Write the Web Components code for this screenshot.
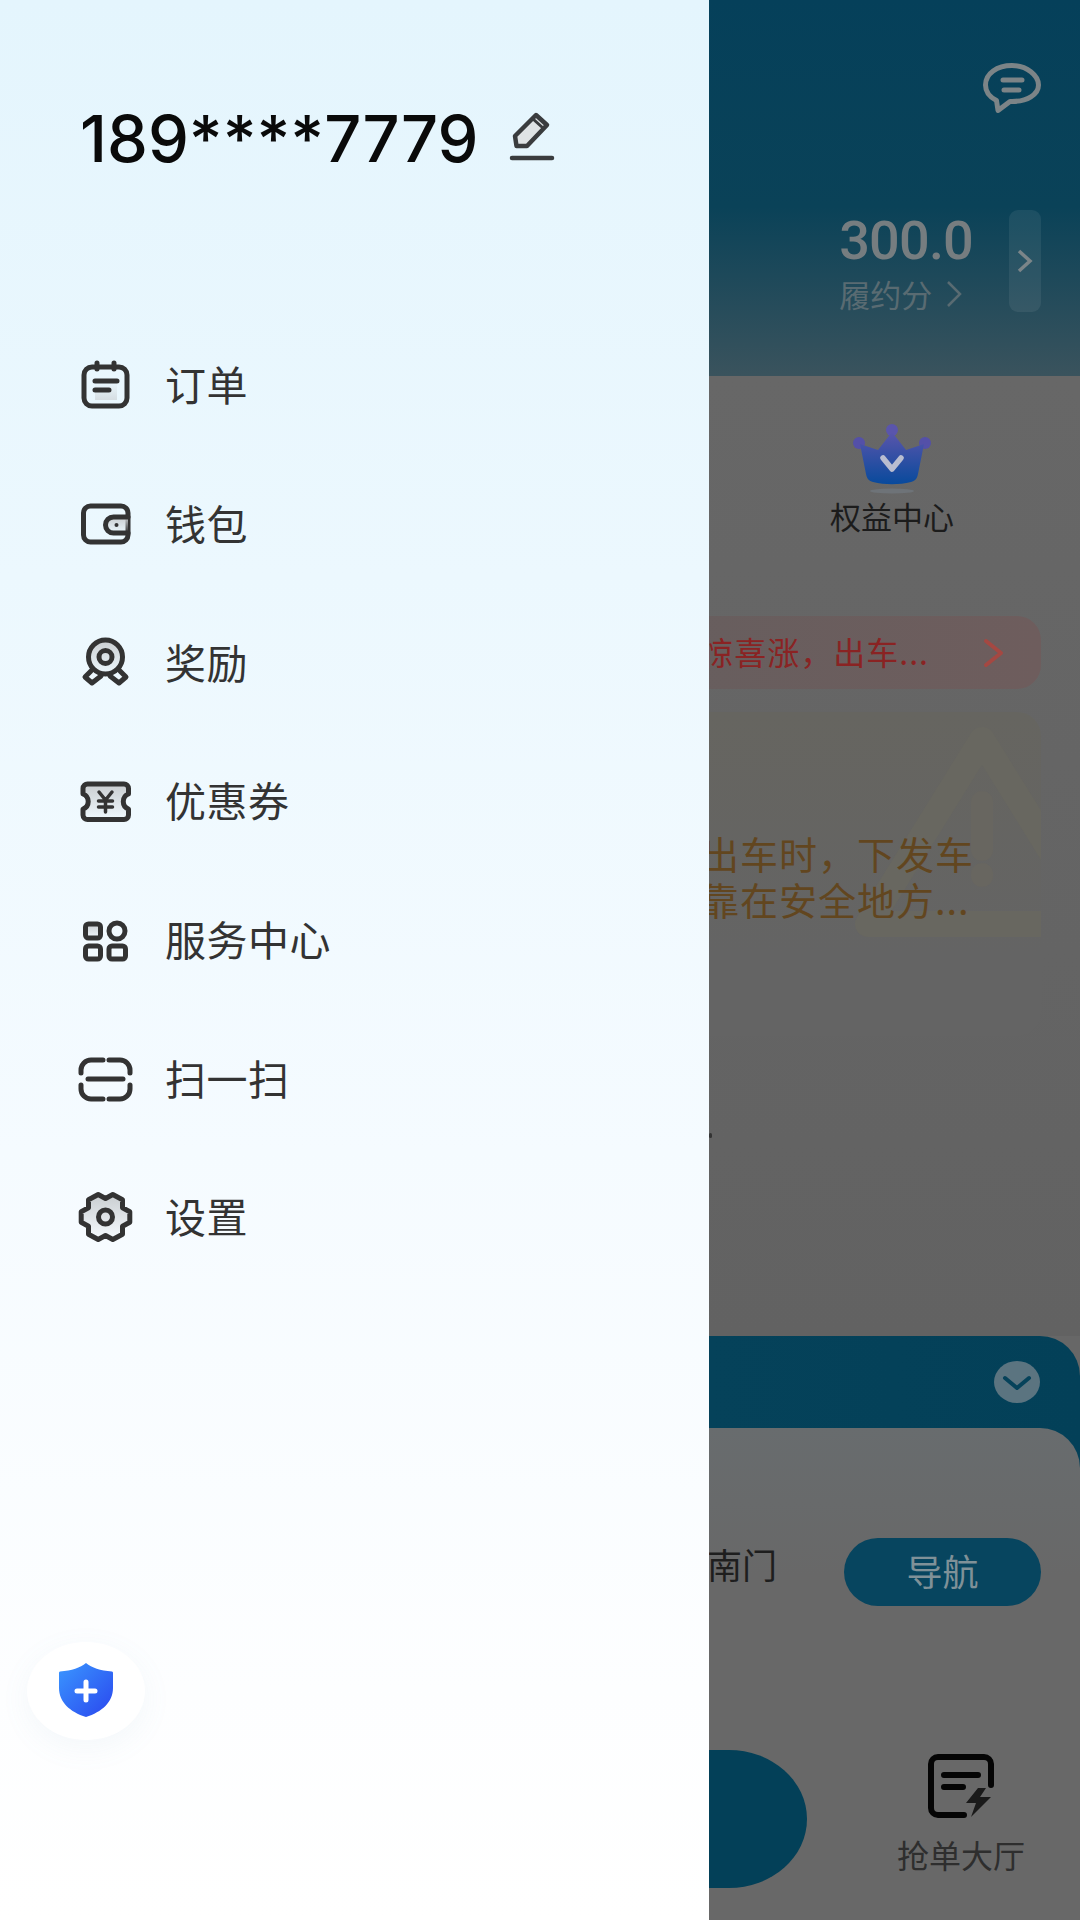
<!DOCTYPE html>
<html lang="zh">
<head>
<meta charset="utf-8">
<title>侧边栏</title>
<style>
  html, body { margin: 0; padding: 0; background: #666; }
  body { width: 1080px; height: 1920px; overflow: hidden; font-family: "Noto Sans CJK SC", "Noto Sans", sans-serif; }
</style>
</head>
<body>
<app-shell>
  <side-drawer>
    <drawer-head slot="head" phone="189****7779"></drawer-head>
    <menu-item icon="order">订单</menu-item>
    <menu-item icon="wallet">钱包</menu-item>
    <menu-item icon="medal">奖励</menu-item>
    <menu-item icon="coupon">优惠券</menu-item>
    <menu-item icon="grid">服务中心</menu-item>
    <menu-item icon="scan">扫一扫</menu-item>
    <menu-item icon="gear">设置</menu-item>
    <shield-button slot="foot"></shield-button>
  </side-drawer>
  <home-behind></home-behind>
</app-shell>

<script>
// gear outline, six teeth pointing left and right
const gearPath = () => {
  const cx = 29.5, cy = 30, pts = [];
  const at = (deg, r) => {
    const a = deg * Math.PI / 180;
    return (cx + r * 1.06 * Math.cos(a)).toFixed(1) + ' ' + (cy + r * Math.sin(a)).toFixed(1);
  };
  for (let k = 0; k < 6; k++) {
    const a = k * 60;
    pts.push(at(a - 13, 23.5), at(a + 13, 23.5), at(a + 30, 18.5));
  }
  return 'M' + pts.join('L') + 'Z';
};

const shade = `<defs><linearGradient id="sh" x1="0" y1="0" x2="0" y2="1">
  <stop offset="0" stop-color="#c9cdd0"/><stop offset="1" stop-color="#c9cdd0" stop-opacity="0"/></linearGradient></defs>`;

// menu icons, all on a 60x60 box
const ICONS = {
  order: `<rect x="8" y="12" width="43" height="39" rx="8"/><path d="M21 8v6M38 8v6"/>
    <rect x="19" y="27" width="22" height="18" fill="url(#sh)" stroke="none" opacity=".6" transform="rotate(180 30 36)"/>
    <path d="M19 26h22M19 35h14"/>`,
  wallet: `<rect x="7.5" y="12" width="44.5" height="36" rx="7" fill="none"/>
    <path d="M52 23H37.5a7.5 7.5 0 0 0 0 16H52" fill="url(#sh)"/><circle cx="40.5" cy="31" r="2" fill="#333" stroke="none"/>`,
  medal: `<circle cx="29.5" cy="24" r="17" fill="url(#sh)"/><circle cx="29.5" cy="24" r="6.5"/>
    <path d="M15 38l-6 6 7 6 9-7M44 38l6 6-7 6-9-7"/>`,
  coupon: `<path d="M12 13h36a4.500 4.500 0 0 1 4.500 4.500V23a8 8 0 0 0 0 15v6a4.500 4.500 0 0 1-4.500 4.500H12A4.500 4.500 0 0 1 7 44v-6a8 8 0 0 0 0-15v-5.500A4.500 4.500 0 0 1 12 13z" fill="url(#sh)"/>
    <path d="M23 21l6.500 8 6.500-8M29.500 29v12M22.500 30h14M22.500 36h14" stroke-width="3.500"/>`,
  grid: `<rect x="9.500" y="14" width="15" height="14" rx="3" fill="url(#sh)"/><circle cx="41" cy="21" r="8"/>
    <rect x="9.500" y="36" width="15" height="13" rx="3"/><rect x="33" y="36" width="16.500" height="13" rx="3"/>`,
  scan: `<path d="M27 11H15a10 10 0 0 0-10 10v3M33 11h11a10 10 0 0 1 10 10v3M5 36v4a10 10 0 0 0 10 10h12M54 36v4a10 10 0 0 1-10 10H33"/>
    <path d="M12 30h35"/>`,
  gear: `<path d="${gearPath()}" fill="url(#sh)"/><circle cx="29.500" cy="30" r="7"/>`
};

class AppShell extends HTMLElement {
  constructor() {
    super();
    this.attachShadow({ mode: 'open' });
    this.shadowRoot.innerHTML = `
      <style>
        :host { display: flex; width: 1080px; height: 1920px; overflow: hidden; }
      </style>
      <slot></slot>`;
  }
}

class SideDrawer extends HTMLElement {
  constructor() {
    super();
    this.attachShadow({ mode: 'open' });
    this.shadowRoot.innerHTML = `
      <style>
        :host {
          display: flex; flex-direction: column; flex: 0 0 709px; height: 1920px; position: relative;
          background: linear-gradient(180deg, #e4f5fd 0%, #ecf8fe 30%, #f5fbff 60%, #fdfeff 88%, #fff 100%);
        }
        .menu { display: flex; flex-direction: column; margin-top: 129px; }
        .foot { flex: 1; display: flex; align-items: flex-end; padding: 0 0 180px 27px; }
      </style>
      <slot name="head"></slot>
      <div class="menu"><slot></slot></div>
      <div class="foot"><slot name="foot"></slot></div>`;
  }
}

class DrawerHead extends HTMLElement {
  connectedCallback() {
    this.attachShadow({ mode: 'open' });
    this.shadowRoot.innerHTML = `
      <style>
        :host { display: flex; align-items: center; height: 187px; padding: 91px 0 0 80px; box-sizing: border-box; }
        .phone { font: 500 65px/96px Inter, sans-serif; color: #0a0a0a; }
        svg { width: 48px; height: 52px; margin: -4px 0 0 30px; }
      </style>
      <span class="phone">${this.getAttribute('phone')}</span>
      <svg viewBox="0 0 48 52" fill="none" stroke="#3a3c3e" stroke-width="4.500" stroke-linejoin="round" stroke-linecap="round">
        <path d="M28 4l11 10-20 21H8.500L7 25z" fill="#dfe3e5"/>
        <path d="M25 8l10 9" stroke-width="3"/>
        <path d="M4 47h40"/>
      </svg>`;
  }
}

class MenuItem extends HTMLElement {
  connectedCallback() {
    this.attachShadow({ mode: 'open' });
    this.shadowRoot.innerHTML = `
      <style>
        :host { display: flex; align-items: center; height: 138.670px; padding-left: 76px; gap: 29px; }
        svg { width: 60px; height: 60px; flex: none; }
        .label { font-size: 41px; line-height: 56px; letter-spacing: .5px; color: #333; margin-top: -4px; }
      </style>
      <svg viewBox="0 0 60 60" fill="none" stroke="#333" stroke-width="5" stroke-linecap="round" stroke-linejoin="round">
        ${shade}${ICONS[this.getAttribute('icon')]}
      </svg>
      <span class="label"><slot></slot></span>`;
  }
}

class ShieldButton extends HTMLElement {
  constructor() {
    super();
    this.attachShadow({ mode: 'open' });
    this.shadowRoot.innerHTML = `
      <style>
        :host {
          display: flex; align-items: center; justify-content: center; width: 118px; height: 98px; border-radius: 50%;
          background: #fff; box-shadow: 0 8px 30px rgba(120,150,190,.07);
        }
        svg { width: 56px; height: 56px; margin-top: -3px; }
      </style>
      <svg viewBox="0 0 56 56">
        <defs><linearGradient id="b" x1="0" y1="0" x2="1" y2="1">
          <stop offset="0" stop-color="#3a97ff"/><stop offset="1" stop-color="#2a46ee"/></linearGradient></defs>
        <path d="M28 1c6 5 14 7.500 26 8.500a1.500 1.500 0 0 1 1 1.500v15c0 14-11 24-27 29C12 50 1 40 1 26V11a1.500 1.500 0 0 1 1-1.500C14 8.500 22 6 28 1z" fill="url(#b)"/>
        <path d="M28 20v18M19 29h18" stroke="#fff" stroke-width="5" stroke-linecap="round"/>
      </svg>`;
  }
}

// the dimmed page seen to the right of the drawer
class HomeBehind extends HTMLElement {
  constructor() {
    super();
    this.attachShadow({ mode: 'open' });
    this.shadowRoot.innerHTML = `
      <style>
        :host { display: flex; flex-direction: column; flex: 0 0 371px; width: 371px; height: 1920px; overflow: hidden; background: #676767; }
        * { box-sizing: border-box; }
        .top {
          height: 376px; display: flex; flex-direction: column; align-items: flex-end; padding: 63px 39px 0 0; flex: none;
          background: linear-gradient(180deg, #05405a 0%, #0a4258 55%, #3a535d 100%);
        }
        .chat { width: 58px; height: 50px; }
        .stats { display: flex; margin-top: 97px; gap: 36px; }
        .score { display: flex; flex-direction: column; padding-top: 2px; }
        .num { font: 500 54px/57px Roboto, sans-serif; color: #767d80; letter-spacing: -.8px; }
        .sub { display: flex; align-items: center; gap: 14px; font-size: 31px; line-height: 42px; color: #596b72; margin-top: 4px; }
        .tab { width: 32px; height: 102px; border-radius: 9px; background: rgba(255,255,255,.07); display: flex; align-items: center; justify-content: center; }

        .card { height: 960px; flex: none; display: flex; flex-direction: column; padding: 48px 39px 0 0; border-top-right-radius: 40px; background: linear-gradient(180deg, #676767, #626262); }
        .perk { align-self: flex-end; margin-right: 87px; display: flex; flex-direction: column; align-items: center; }
        .perk svg { width: 84px; height: 72px; }
        .perk span { font-size: 31px; line-height: 44px; color: #1c1c1c; margin-top: -2px; }

        .notice { margin-top: 78px; height: 73px; border-radius: 24px; margin-left: -40px; padding-right: 36px; display: flex; align-items: center; justify-content: flex-end; gap: 54px; background: linear-gradient(90deg, #675e5e, #6e5d5d); }
        .notice span { font-size: 32px; color: #8a2323; letter-spacing: 1px; white-space: nowrap; margin-top: -3px; }

        .warn { margin-top: 23px; height: 324px; border-radius: 24px; margin-left: -40px; position: relative; overflow: hidden; display: flex; flex-direction: column; align-items: flex-end; padding: 118px 67px 0 0; background: linear-gradient(180deg, #666560, #646464 75%); }
        .warn svg { position: absolute; right: -83px; top: 14px; width: 270px; height: 220px; }
        .warn span { position: relative; font-size: 38px; line-height: 46px; letter-spacing: 1px; color: #62461f; white-space: nowrap; }
        .dot { width: 3px; height: 5px; margin-top: 97px; background: #333; border-radius: 2px; }

        .panel { flex: 1; display: flex; flex-direction: column; border-top-right-radius: 40px; background: linear-gradient(90deg, #05425a, #034058); }
        .panel-head { height: 92px; flex: none; display: flex; align-items: center; justify-content: flex-end; padding-right: 40px; }
        .panel-head svg { width: 46px; height: 42px; }
        .panel-body { flex: 1; display: flex; flex-direction: column; border-top-right-radius: 40px; background: linear-gradient(180deg, #686c6e, #686868 30%); }
        .addr { display: flex; align-items: center; justify-content: space-between; margin-top: 110px; padding-right: 39px; }
        .addr > span { font-size: 35px; color: #1e1e1e; white-space: nowrap; margin: -18px 0 0 -2px; }
        .nav { width: 197px; height: 68px; border-radius: 34px; background: #07455f; color: #7f9198; font-size: 36px; padding-bottom: 4px; display: flex; align-items: center; justify-content: center; }
        .bottom { display: flex; margin-top: 144px; align-items: flex-start; }
        .go { width: 98px; height: 138px; border-radius: 0 78px 78px 0 / 0 69px 69px 0; background: #034058; flex: none; }
        .hall { display: flex; flex-direction: column; align-items: center; margin-left: 90px; margin-top: 4px; }
        .hall svg { width: 66px; height: 64px; }
        .hall span { font-size: 32px; line-height: 44px; color: #2e2e2e; margin-top: 14px; white-space: nowrap; }
      </style>

      <div class="top">
        <svg class="chat" viewBox="0 0 58 50" fill="none" stroke="#7c8487" stroke-width="5" stroke-linecap="round" stroke-linejoin="round">
          <path d="M29 2.500C14 2.500 2.500 10.500 2.500 22c0 6.500 4 12 11 15.500l1.500 10 12-9c1 0 1.500 0 2 0 15 0 26.500-7 26.500-16.500S44 2.500 29 2.500z"/>
          <path d="M20 17h19M21 27h15"/>
        </svg>
        <div class="stats">
          <div class="score">
            <div class="num">300.0</div>
            <div class="sub">履约分
              <svg width="16" height="28" viewBox="0 0 16 28" fill="none" stroke="#596b72" stroke-width="2.500"><path d="M2 2l12 12L2 26"/></svg>
            </div>
          </div>
          <div class="tab">
            <svg width="16" height="24" viewBox="0 0 16 24" fill="none" stroke="#7b8589" stroke-width="3.500"><path d="M2 2l11 10L2 22"/></svg>
          </div>
        </div>
      </div>

      <div class="card">
        <div class="perk">
          <svg viewBox="0 0 84 72">
            <defs><linearGradient id="cr" x1="0" y1="0" x2="0" y2="1">
              <stop offset="0" stop-color="#5a55ac"/><stop offset="1" stop-color="#084a9c"/></linearGradient></defs>
            <circle cx="42" cy="6" r="6" fill="#5a55ac"/><circle cx="9" cy="19" r="6" fill="#5450a8"/><circle cx="75" cy="19" r="6" fill="#5450a8"/>
            <path d="M42 8l14 18 18-6-6 30c-1 5-3 7-7 8-12 3-26 3-38 0-4-1-6-3-7-8L10 20l18 6z" fill="url(#cr)"/>
            <path d="M33 34l9 11 9-11" fill="none" stroke="#b9bdd0" stroke-width="5.500" stroke-linecap="round" stroke-linejoin="round"/>
            <ellipse cx="42" cy="67" rx="22" ry="2.500" fill="#6e7378"/>
          </svg>
          <span>权益中心</span>
        </div>
        <div class="notice">
          <span>惊喜涨，出车...</span>
          <svg width="22" height="30" viewBox="0 0 22 30" fill="none" stroke="#a54842" stroke-width="4" stroke-linecap="round" stroke-linejoin="round"><path d="M3 3l15 12L3 27"/></svg>
        </div>
        <div class="warn">
          <svg viewBox="0 0 270 220" fill="none" stroke="#686760" stroke-width="26" stroke-linejoin="round" stroke-linecap="round">
            <path d="M128 14L14 198h228z"/>
            <path d="M128 76v48M128 148v2" stroke="#686660" stroke-width="22"/>
          </svg>
          <span>出车时，下发车<br>靠在安全地方...</span>
        </div>
        <div class="dot"></div>
      </div>

      <div class="panel">
        <div class="panel-head">
          <svg viewBox="0 0 46 42"><ellipse cx="23" cy="21" rx="23" ry="21" fill="#5b7480"/>
            <path d="M11 17l12 10 12-10" fill="none" stroke="#05425a" stroke-width="4" stroke-linecap="round" stroke-linejoin="round"/></svg>
        </div>
        <div class="panel-body">
          <div class="addr">
            <span>南门</span>
            <div class="nav">导航</div>
          </div>
          <div class="bottom">
            <div class="go"></div>
            <div class="hall">
              <svg viewBox="0 0 66 64" fill="none" stroke="#050505" stroke-width="6" stroke-linecap="round" stroke-linejoin="round">
                <path d="M63 31V10a7 7 0 0 0-7-7H10a7 7 0 0 0-7 7v44a7 7 0 0 0 7 7h26"/>
                <path d="M16 21h34M16 33h19"/>
                <path d="M50 34L38 49h10l-5 14 20-20H52l6-9z" fill="#1a1a1a" stroke="none"/>
              </svg>
              <span>抢单大厅</span>
            </div>
          </div>
        </div>
      </div>`;
  }
}

customElements.define('app-shell', AppShell);
customElements.define('side-drawer', SideDrawer);
customElements.define('drawer-head', DrawerHead);
customElements.define('menu-item', MenuItem);
customElements.define('shield-button', ShieldButton);
customElements.define('home-behind', HomeBehind);
</script>
</body>
</html>
